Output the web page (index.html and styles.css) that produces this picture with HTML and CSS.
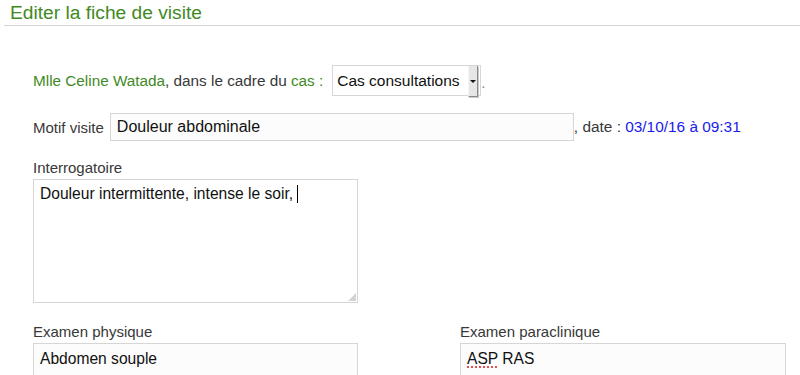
FILE: index.html
```html
<!DOCTYPE html>
<html lang="fr">
<head>
<meta charset="utf-8">
<title>Editer la fiche de visite</title>
<link rel="stylesheet" href="styles.css">
</head>
<body>
<div class="page">
  <h1 class="title">Editer la fiche de visite</h1>
  <div class="content">
    <div class="row row-case">
      <span class="green">Mlle Celine Watada</span><span>, dans le cadre du </span><span class="green">cas :</span>
      <div class="select">
        <span class="select-text">Cas consultations</span>
        <span class="select-btn"><span class="arrow"></span></span>
      </div>
      <span class="dot">.</span>
    </div>
    <div class="row row-motif">
      <span class="label-inline">Motif visite</span>
      <div class="input">Douleur abdominale</div>
      <span class="date-text">, date : </span><span class="blue">03/10/16 à 09:31</span>
    </div>
    <div class="field field-first">
      <div class="label">Interrogatoire</div>
      <div class="textarea tall">Douleur intermittente, intense le soir, <span class="caret"></span><span class="grip"></span></div>
    </div>
    <div class="cols">
      <div class="field col">
        <div class="label">Examen physique</div>
        <div class="textarea">Abdomen souple</div>
      </div>
      <div class="field col">
        <div class="label">Examen paraclinique</div>
        <div class="textarea"><span class="spell">ASP</span> RAS</div>
      </div>
    </div>
  </div>
</div>
</body>
</html>
```

FILE: styles.css
```css
html, body {
  margin: 0;
  padding: 0;
  background: #fff;
}
body {
  font-family: "Liberation Sans", Arial, sans-serif;
  font-size: 15px;
  color: #383838;
  overflow: hidden;
}
.page {
  width: 800px;
}
.title {
  margin: 0 0 0 4px;
  padding: 3px 0 2px 6px;
  font-size: 19.2px;
  font-weight: normal;
  line-height: 20px;
  color: #3f8a25;
  border-bottom: 1px solid #d4d4d4;
}
.content {
  padding: 39px 0 0 33px;
}
.row {
  display: flex;
  align-items: center;
  white-space: pre;
}
.row-case {
  font-size: 15.3px;
}
.green {
  color: #3f8a25;
}
.blue {
  color: #1a1aee;
}
.select {
  display: flex;
  align-items: stretch;
  margin-left: 9px;
  height: 29px;
  width: 147px;
  border: 1px solid #d6d6d6;
  background: #fff;
  box-sizing: content-box;
}
.select-text {
  flex: 1;
  display: flex;
  align-items: center;
  padding-left: 4px;
  font-size: 15.5px;
  color: #111;
}
.select-btn {
  width: 8px;
  margin: 0 2px -2px 0;
  background: #e6e6e6;
  border-right: 1px solid #8a8a8a;
  border-bottom: 1px solid #8a8a8a;
  border-left: 1px solid #f6f6f6;
  box-shadow: 1px 1px 0 #c8c8c8;
  display: flex;
  align-items: center;
  justify-content: center;
}
.arrow {
  width: 0;
  height: 0;
  border-left: 3px solid transparent;
  border-right: 3px solid transparent;
  border-top: 3px solid #111;
  margin-top: 1px;
}
.dot {
  align-self: flex-end;
  margin-bottom: 4px;
  color: #888;
}
.row-motif {
  margin-top: 17px;
}
.label-inline {
  margin-right: 6px;
}
.input {
  width: 456px;
  height: 26px;
  padding-left: 6px;
  border: 1px solid #d6d6d6;
  background: #fcfcfc;
  font-size: 16px;
  line-height: 26px;
  color: #111;
  box-sizing: content-box;
}
.date-text {
  font-size: 15.4px;
}
.blue {
  font-size: 15.4px;
}
.field {
  display: flex;
  flex-direction: column;
}
.field .label {
  line-height: 18px;
  margin-bottom: 2px;
}
.field-first {
  margin-top: 18px;
}
.textarea {
  position: relative;
  width: 317px;
  padding: 4px 0 0 6px;
  border: 1px solid #d6d6d6;
  background: #fff;
  font-size: 15.6px;
  line-height: 20px;
  color: #111;
  height: 60px;
}
.tall {
  height: 118px;
}
.caret {
  display: inline-block;
  width: 1px;
  height: 18px;
  background: #000;
  vertical-align: -4px;
}
.grip {
  position: absolute;
  right: 1px;
  bottom: 1px;
  width: 8px;
  height: 8px;
  background:
    radial-gradient(circle, #a0a0a0 0.6px, transparent 0.8px) 0 0 / 2px 2px;
  clip-path: polygon(100% 0, 100% 100%, 0 100%);
}
.cols {
  display: flex;
  gap: 102px;
  margin-top: 20px;
}
.col .textarea {
  background: #fcfcfc;
  padding-top: 5px;
}
.col:last-child .textarea {
  width: 318px;
}
.spell {
  text-decoration: underline dotted #e02020;
  text-underline-offset: 3px;
}
```
